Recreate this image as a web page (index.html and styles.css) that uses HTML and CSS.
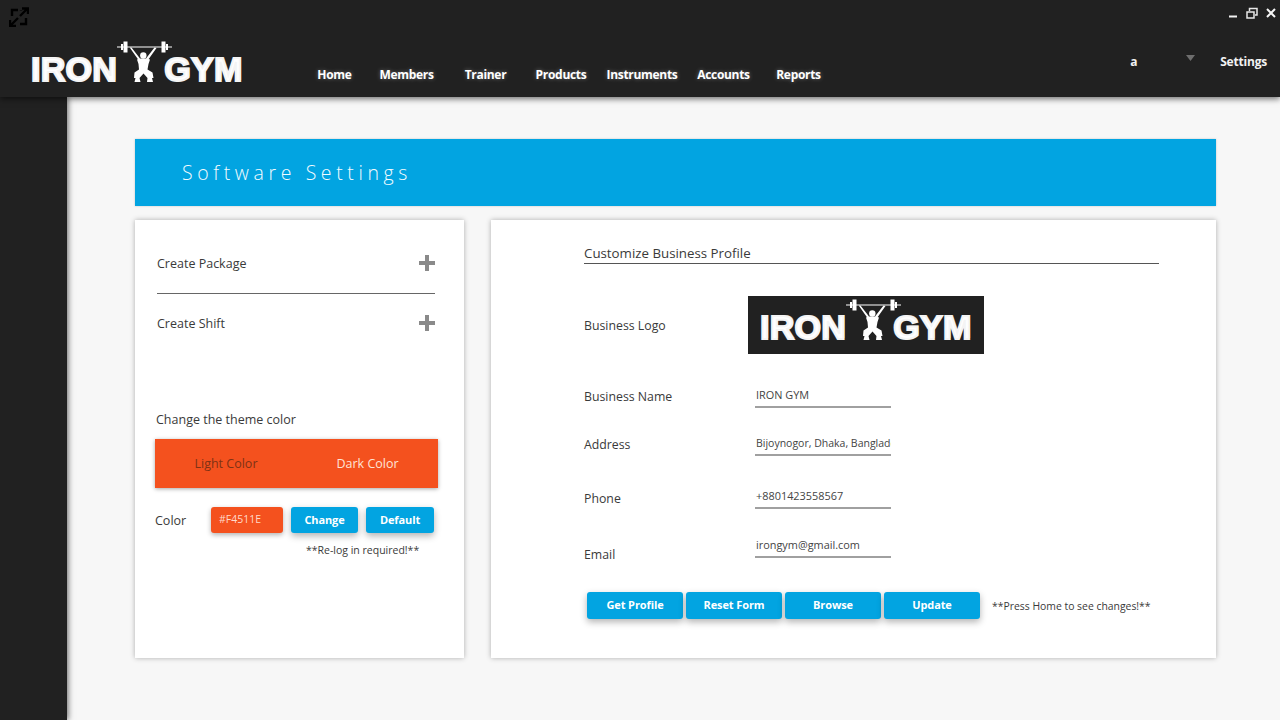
FILE: index.html
```html
<!DOCTYPE html>
<html lang="en">
<head>
<meta charset="utf-8">
<title>Iron Gym - Software Settings</title>
<link rel="stylesheet" href="styles.css">
</head>
<body>
<svg class="defs" width="0" height="0" aria-hidden="true">
  <symbol id="lifter" viewBox="0 0 55 42">
    <path d="M0 6.400H55V7.600H0z" fill="#fff"/>
    <path d="M4 4H6V10H4zM6.500 1.500H10.500V12.500H6.500zM44.500 1.500H48.500V12.500H44.500zM49 4H51V10H49z" fill="#fff"/>
    <path d="M12.700 7.500 21.500 20 23 18.500 14.500 7.500zM37.500 7.500 29 18.500 31 20 39.500 8z" fill="#fff"/>
    <circle cx="26.300" cy="15.500" r="3.200" fill="#fff"/>
    <path d="M20 19.500 22.500 18.500 30 18.500 33 19.500 31.500 24 30.500 29.500 35.500 32.500 36.500 38 35 38 36 42H30L30.500 38 26.500 33.500 22.500 38 23.500 42H17.500L18.500 38 17 38 17.500 32.500 22 29.500 21.500 24z" fill="#fff"/>
  </symbol>
</svg>
<header class="header">
  <div class="topbar">
    <svg class="expand" viewBox="0 0 20 20" width="20" height="20" fill="none" stroke="#000" stroke-width="2.400">
      <path d="M3 9V3H9M12 3.500V3M11 9 18 2M13 1.500H19V7M1 13V19H7M2 18 9 11M17 11V17H11"/>
    </svg>
    <div class="winctl">
      <svg viewBox="0 0 12 12" width="12" height="12"><path d="M2 9.500H10" stroke="#f2f2f2" stroke-width="2"/></svg>
      <svg viewBox="0 0 12 12" width="12" height="12" fill="none" stroke="#e8e8e8" stroke-width="1.500"><path d="M1 5H8V11H1zM3.500 4V1.500H11V8H9"/></svg>
      <svg viewBox="0 0 12 12" width="12" height="12"><path d="M2 2 10 10M10 2 2 10" stroke="#f5f5f5" stroke-width="2"/></svg>
    </div>
  </div>
  <div class="navrow">
    <div class="logo">
      <span class="logo-word">IRON</span>
      <svg class="logo-fig"><use href="#lifter"/></svg>
      <span class="logo-word">GYM</span>
    </div>
    <nav class="nav">
      <a>Home</a><a>Members</a><a>Trainer</a><a>Products</a><a>Instruments</a><a>Accounts</a><a>Reports</a>
    </nav>
    <div class="user">
      <span>a</span>
      <svg class="chev" viewBox="0 0 9 6" width="9" height="6"><path d="M0 0H9L4.500 6z" fill="#6e6e6e"/></svg>
      <span>Settings</span>
    </div>
  </div>
</header>
<div class="body">
  <aside class="side"></aside>
  <main class="main">
    <div class="banner">Software Settings</div>
    <div class="cards">
      <section class="card left">
        <div class="create first"><span>Create Package</span><span class="plus"></span></div>
        <div class="rule"></div>
        <div class="create second"><span>Create Shift</span><span class="plus"></span></div>
        <div class="theme-title">Change the theme color</div>
        <div class="toggle"><span class="light">Light Color</span><span class="dark">Dark Color</span></div>
        <div class="color-row">
          <span class="color-label">Color</span>
          <span class="chip">#F4511E</span>
          <button class="btn small">Change</button>
          <button class="btn small">Default</button>
        </div>
        <div class="relog">**Re-log in required!**</div>
      </section>
      <section class="card right">
        <h2 class="profile-title">Customize Business Profile</h2>
        <div class="row logo-row">
          <span class="label logo-label">Business Logo</span>
          <div class="logo-box">
            <div class="logo">
              <span class="logo-word">IRON</span>
              <svg class="logo-fig"><use href="#lifter"/></svg>
              <span class="logo-word">GYM</span>
            </div>
          </div>
        </div>
        <div class="row r-name"><span class="label">Business Name</span><input class="field" value="IRON GYM"></div>
        <div class="row r-addr"><span class="label">Address</span><input class="field field-addr" value="Bijoynogor, Dhaka, Bangladesh"></div>
        <div class="row r-phone"><span class="label l-phone">Phone</span><input class="field" value="+8801423558567"></div>
        <div class="row r-email"><span class="label l-email">Email</span><input class="field" value="irongym@gmail.com"></div>
        <div class="actions">
          <button class="btn wide">Get Profile</button>
          <button class="btn wide">Reset Form</button>
          <button class="btn wide">Browse</button>
          <button class="btn wide">Update</button>
          <span class="press">**Press Home to see changes!**</span>
        </div>
      </section>
    </div>
  </main>
</div>
</body>
</html>
```
FILE: styles.css
```css
* { box-sizing: border-box; }
html, body { margin: 0; height: 720px; overflow: hidden; }
body {
  display: flex;
  flex-direction: column;
  font-family: "Open Sans", "Noto Sans", sans-serif;
  color: #3a3a3a;
  background: #f7f7f7;
}
.defs { display: block; height: 0; }

.header {
  flex: none;
  height: 97px;
  background: #212121;
  box-shadow: 0 2px 6px rgba(0,0,0,.55);
  z-index: 2;
}
.topbar {
  height: 28px;
  display: flex;
  justify-content: space-between;
  align-items: flex-start;
  padding: 7px 3px 0 9px;
}
.winctl { display: flex; gap: 7px; }
.winctl svg { display: block; }
.navrow { display: flex; align-items: flex-start; height: 69px; padding: 0 13px 0 31px; }

.logo { display: flex; align-items: flex-end; width: 212px; height: 42px; margin-top: 12px; flex: none; }
.logo-word {
  font-family: "Liberation Sans", Arial, sans-serif;
  font-weight: 700;
  font-size: 34px;
  line-height: 25px;
  height: 25px;
  color: #fff;
  -webkit-text-stroke: 2px #f4f4f4;
  text-shadow: 1px -1px 0 #8c8c8c;
  letter-spacing: .3px;
}
.logo-fig { width: 55px; height: 42px; flex: none; margin-right: -8px; }

.nav {
  display: grid;
  grid-template-columns: 69px 75px 83px 68px 94px 69px 81px;
  margin: 37px 0 0 57px;
}
.nav a {
  text-align: center;
  font-size: 12px;
  letter-spacing: -.3px;
  font-weight: 700;
  line-height: 20px;
  color: #fff;
  text-shadow: 0 0 4px rgba(255,255,255,.35);
  white-space: nowrap;
}
.user {
  margin: 24px 0 0 auto;
  display: flex;
  align-items: flex-start;
  gap: 49px;
  font-size: 12px;
  letter-spacing: -.2px;
  font-weight: 700;
  line-height: 20px;
  color: #f2f2f2;
}
.chev { margin: 3px -24px 0 0; }

.body { flex: 1; display: flex; min-height: 0; }
.side { width: 67px; flex: none; background: #212121; box-shadow: 1px 0 6px rgba(0,0,0,.6); z-index: 1; }
.main { flex: 1; padding: 42px 64px 0 68px; }
.banner {
  height: 67px;
  background: #02a4e1;
  color: #f2fbff;
  font-size: 19.500px;
  font-weight: 300;
  letter-spacing: 4.600px;
  line-height: 67px;
  padding-left: 47px;
  box-shadow: 0 0 2px rgba(0,0,0,.2);
}
.cards { display: flex; gap: 27px; margin-top: 14px; }
.card { height: 438px; background: #fff; box-shadow: 0 0 5px rgba(0,0,0,.3); flex: none; }
.left { width: 329px; padding-left: 20px; }
.right { width: 725px; padding-left: 93px; }

.create {
  width: 278px;
  height: 40px;
  margin-left: 2px;
  display: flex;
  justify-content: space-between;
  align-items: center;
  font-size: 12.500px;
}
.first { margin-top: 23px; }
.second { margin-top: 9px; }
.plus {
  width: 16px;
  height: 16px;
  background:
    linear-gradient(#8a8a8a, #8a8a8a) center / 16px 4px no-repeat,
    linear-gradient(#8a8a8a, #8a8a8a) center / 4px 16px no-repeat;
}
.rule { width: 278px; height: 1px; margin: 10px 0 0 2px; background: #666; }
.theme-title { margin: 67px 0 0 1px; font-size: 12.500px; line-height: 20px; }
.toggle {
  width: 283px;
  height: 49px;
  margin-top: 9px;
  display: grid;
  grid-template-columns: 142px 141px;
  align-items: center;
  text-align: center;
  background: #f4511e;
  font-size: 12.500px;
  box-shadow: 0 1px 4px rgba(0,0,0,.35);
}
.light { color: #7e3215; }
.dark { color: #ffe3d6; }
.color-row { display: flex; align-items: center; margin-top: 19px; height: 26px; }
.color-label { width: 56px; font-size: 12.500px; }
.chip {
  width: 72px;
  height: 26px;
  margin-right: 8px;
  padding-left: 8px;
  line-height: 25px;
  background: #f4511e;
  border-radius: 3px;
  color: #ffd9c9;
  font-size: 10.500px;
  box-shadow: 0 2px 5px rgba(0,0,0,.3);
}
.btn {
  border: 0;
  padding: 0 0 2px;
  background: #02a4e1;
  color: #fff;
  font-family: inherit;
  font-weight: 700;
  font-size: 11px;
  letter-spacing: -.1px;
  border-radius: 3px;
  box-shadow: 0 3px 7px rgba(0,0,0,.3);
}
.small { width: 67px; height: 26px; margin-right: 8px; }
.small + .small { width: 68px; }
.relog { margin: 9px 0 0 151px; font-size: 10.500px; line-height: 16px; }

.profile-title {
  width: 575px;
  margin: 23px 0 0;
  height: 21px;
  border-bottom: 1px solid #555;
  font-size: 13.300px;
  font-weight: 400;
  line-height: 20px;
}
.row { display: flex; align-items: flex-start; }
.label { width: 171px; flex: none; padding-top: 1px; font-size: 12.300px; line-height: 20px; }
.logo-row { margin-top: 32px; align-items: center; }
.logo-label { width: 164px; }
.logo-box { width: 236px; height: 58px; padding-left: 12px; background: #212121; }
.logo-box .logo { margin-top: 2px; }
.r-name { margin-top: 32px; }
.r-addr { margin-top: 26px; }
.r-phone { margin-top: 31px; }
.r-email { margin-top: 27px; }
.l-phone { margin-top: 1px; }
.l-email { margin-top: 8px; }
.field {
  width: 136px;
  height: 22px;
  padding: 0 0 3px 1px;
  border: 0;
  border-bottom: 2px solid #a0a0a0;
  outline: 0;
  background: transparent;
  font-family: inherit;
  font-size: 10.900px;
  color: #444;
}
.field-addr { font-size: 10.500px; }
.actions { display: flex; align-items: center; gap: 3px; margin: 27px 0 0 3px; }
.wide { width: 96px; height: 27px; }
.press { margin-left: 9px; font-size: 10.400px; }
```
